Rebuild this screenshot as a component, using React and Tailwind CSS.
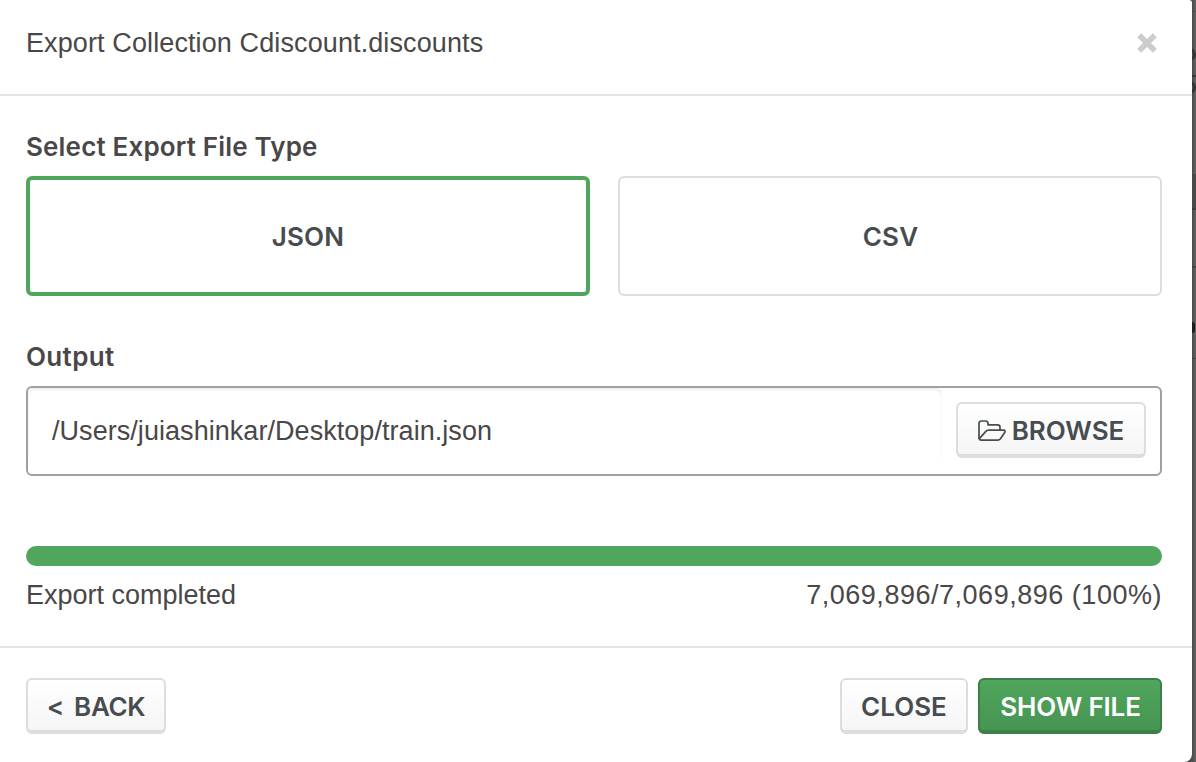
import React from "react";

function FolderOpenIcon() {
  return (
    <svg width="28" height="22" viewBox="0 0 28 22" fill="none" stroke="currentColor" strokeWidth="1.7" strokeLinejoin="round" strokeLinecap="round" className="shrink-0">
      <path d="M1 18V3.4A2.4 2.4 0 0 1 3.4 1H7.6A2.4 2.4 0 0 1 10 3.4V4.8H19.6A2.4 2.4 0 0 1 22 7.2V9.8" />
      <path d="M1 18A2.4 2.4 0 0 0 3.4 20.2H19.6C20.8 20.2 21.8 19.7 22.5 18.8L26.7 12.6C27.6 11.1 27 10.2 25.4 10.2H10.6C9.4 10.2 8.4 10.7 7.6 11.6L1.4 18.6" />
    </svg>
  );
}

const plain =
  "flex h-14 items-center justify-center rounded-[6px] border-2 border-b-4 border-[#dddddd] bg-linear-to-b from-white to-[#f5f5f5] pt-1 text-[#464c4f] font-semibold";

function Backdrop() {
  return (
    <div className="relative h-[762px] w-1 shrink-0 overflow-hidden bg-linear-to-r from-[#4a4a49] to-[#626463]">
      <div className="absolute top-[48px] -left-[9px] size-[13px] rounded-full border-[3px] border-[#333435]" />
      <div className="absolute top-[75px] left-0 h-[2px] w-1 bg-[#353637]" />
      <div className="absolute top-[81px] -left-[9px] size-[13px] rounded-full border-[3px] border-[#333435]" />
      <div className="absolute top-[11px] left-0 h-px w-1 bg-[#4b4c4c]" />
      <div className="absolute top-[174px] left-0 h-[35px] w-1 bg-[#49494a]" />
      <div className="absolute top-[208px] left-0 h-[2px] w-1 bg-[#3b3c3d]" />
      <div className="absolute top-[266px] left-0 h-[2px] w-1 bg-[#434444]" />
      <div className="absolute top-[322px] left-0 h-[11px] w-[3px] rounded-r bg-[#1d1d1e]" />
      <div className="absolute top-[358px] left-0 h-px w-1 bg-[#434444]" />
    </div>
  );
}

export default function App() {
  return (
    <div className="flex h-[762px] w-[1196px] overflow-hidden bg-[#4e4e4d] font-['Liberation_Sans',Arial,sans-serif] text-[27px] leading-8 text-[#494747]">
      <div className="flex w-[1192px] shrink-0 flex-col rounded-tr-[3px] rounded-br-[8px] bg-white">
        <header className="flex h-24 items-start justify-between border-b-2 border-[#e5e5e5] pt-[27px] pr-[35px] pl-[26px]">
          <h1 className="whitespace-nowrap tracking-[0.11px]">Export Collection Cdiscount.discounts</h1>
          <button aria-label="Close" className="mt-[6px]">
            <svg width="20" height="20" viewBox="0 0 20 20" className="block text-[#cccccc]" stroke="currentColor" strokeWidth="5.6">
              <path d="M2.2 2.2 17.8 17.8M17.8 2.2 2.2 17.8" />
            </svg>
          </button>
        </header>

        <main className="flex h-[550px] flex-col pr-[30px] pl-[26px]">
          <h2 className="mt-[35px] font-['Inter',sans-serif] text-[26px] font-semibold tracking-[0.17px] whitespace-nowrap">Select Export File Type</h2>
          <div className="mt-[13px] flex gap-7 font-['Inter',sans-serif] text-[26px] font-semibold">
            <button className="flex h-[120px] w-[564px] items-center justify-center rounded-[6px] border-4 border-[#4fa65c] pt-[2px] tracking-[0.2px] text-[#464c4f]">
              <span>JSON</span>
            </button>
            <button className="flex h-[120px] w-[544px] items-center justify-center rounded-[6px] border-2 border-[#dddddd] pt-[2px] pl-px tracking-[0.2px] text-[#464c4f]">
              <span>CSV</span>
            </button>
          </div>

          <h2 className="mt-[45px] font-['Inter',sans-serif] text-[26px] font-semibold tracking-[0.35px] whitespace-nowrap">
            <span>Output</span>
          </h2>
          <div className="mt-[13px] flex h-[90px] items-start rounded-[6px] border-2 border-[#a0a0a0] pr-[14px]">
            <div className="h-[72px] w-[914px] rounded-[6px] pt-[27px] pl-6 shadow-[inset_0_2px_3px_#ececec]">
              <span className="tracking-[0.05px] whitespace-nowrap">/Users/juiashinkar/Desktop/train.json</span>
            </div>
            <button className={`${plain} mt-[14px] ml-[14px] w-[190px] gap-[6px] font-['Inter',sans-serif] text-[26px]`}>
              <FolderOpenIcon />
              <span>BROWSE</span>
            </button>
          </div>

          <div className="mt-[70px] h-5 rounded-full bg-[#4fa65c]" />
          <div className="mt-[13px] flex justify-between whitespace-nowrap">
            <span>Export completed</span>
            <span className="tracking-[0.52px]">7,069,896/7,069,896 (100%)</span>
          </div>
        </main>

        <footer className="flex h-[116px] items-start border-t-2 border-[#e5e5e5] pt-[30px] pr-[30px] pl-[26px] font-['Inter',sans-serif] text-[26px]">
          <button className={`${plain} w-[140px]`}>
            <span className="tracking-[-0.3px] [word-spacing:4px]">&lt; BACK</span>
          </button>
          <button className={`${plain} ml-auto w-32`}>
            <span>CLOSE</span>
          </button>
          <button className="ml-[10px] flex h-14 w-[184px] items-center justify-center rounded-[6px] border-2 border-b-4 border-[#3d7f48] bg-linear-to-b from-[#4fa65c] to-[#479453] pt-1 pl-px font-semibold text-white">
            <span className="tracking-[-0.15px]">SHOW FILE</span>
          </button>
        </footer>
      </div>
      <Backdrop />
    </div>
  );
}
